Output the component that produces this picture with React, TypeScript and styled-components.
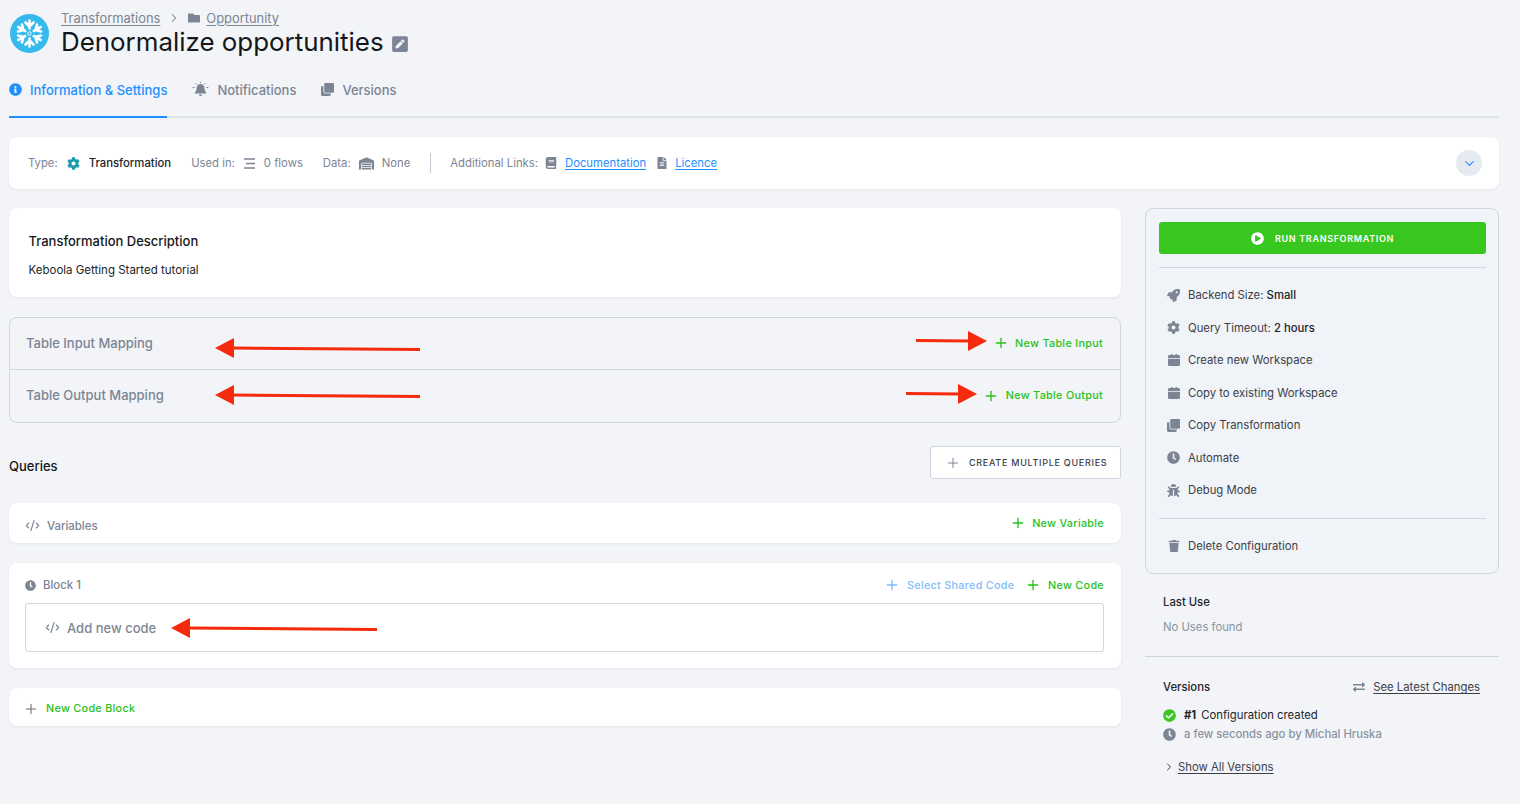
import React, { ReactNode } from "react";
import styled, { createGlobalStyle } from "styled-components";
import { Plus, ChevronRight, ChevronDown, CodeXml } from "lucide-react";
import {
  FaFolder,
  FaPenSquare,
  FaInfoCircle,
  FaClone,
  FaCog,
  FaWarehouse,
  FaBook,
  FaFileAlt,
  FaRocket,
  FaClock,
  FaBug,
  FaTrash,
  FaCheckCircle,
  FaPlayCircle,
  FaExchangeAlt,
} from "react-icons/fa";

const GlobalStyle = createGlobalStyle`
  html, body {
    margin: 0;
    background: #f2f4f8;
    font-family: Inter, "Liberation Sans", sans-serif;
    color: #222529;
  }
  * { box-sizing: border-box; }
`;

const Page = styled.div`
  width: 1520px;
  height: 804px;
  overflow: hidden;
  padding: 8px 21px 0 9px;
`;

const Header = styled.header`
  display: flex;
  gap: 12px;
  height: 52px;
`;

const LogoWrap = styled.div`
  padding: 6px 0 0 1px;
  line-height: 0;
`;

const HeaderText = styled.div`
  display: flex;
  flex-direction: column;
`;

const Crumbs = styled.div`
  display: flex;
  align-items: center;
  height: 18px;
  padding-top: 2px;
  font-size: 12.9px;
  color: #7c8594;
  svg { flex: none; }
`;

const CrumbLink = styled.span`
  text-decoration: underline;
  text-underline-offset: 2px;
  text-decoration-thickness: 1px;
`;

const Title = styled.h1`
  display: flex;
  align-items: center;
  gap: 7px;
  margin: 0;
  font-size: 25.9px;
  line-height: 32px;
  font-weight: 400;
  color: #14171a;
  svg { color: #7c8594; margin-top: 3px; }
`;

const Tabs = styled.nav`
  display: flex;
  gap: 25px;
  margin-top: 13px;
  height: 45px;
  border-bottom: 2px solid #dfe3ea;
`;

const Tab = styled.div<{ $active?: boolean }>`
  display: flex;
  align-items: center;
  gap: 8px;
  height: 45px;
  padding-bottom: 10px;
  font-size: 13px;
  font-weight: 500;
  color: ${({ $active }) => ($active ? "#1f8fff" : "#7c8594")};
  border-bottom: 2px solid ${({ $active }) => ($active ? "#1f8fff" : "transparent")};
`;

const Card = styled.section`
  background: #fff;
  border-radius: 8px;
  box-shadow: 0 1px 3px rgba(34, 37, 41, 0.07);
`;

const MetaBar = styled(Card)`
  display: flex;
  align-items: center;
  height: 52px;
  margin-top: 19px;
  padding: 0 17px 0 19px;
  font-size: 11.3px;
  color: #7c8594;
`;

const MetaGroup = styled.div<{ $gap: number }>`
  display: flex;
  align-items: center;
  gap: ${({ $gap }) => $gap}px;
  margin-right: 20px;
`;

const MetaDivider = styled.div`
  width: 1px;
  height: 20px;
  background: #c5cbd6;
  margin-right: 19px;
`;

const Strong = styled.span`
  color: #222529;
`;

const MediumStrong = styled(Strong)`
  font-weight: 500;
`;

const DocLink = styled.a`
  color: #1f8fff;
  text-decoration: underline;
  text-underline-offset: 2px;
  margin-right: 2px;
`;

const RoundButton = styled.div`
  display: flex;
  align-items: center;
  justify-content: center;
  width: 26px;
  height: 26px;
  margin-left: auto;
  border-radius: 50%;
  background: #e6ebf2;
  color: #1f8fff;
`;

const Columns = styled.div`
  display: grid;
  grid-template-columns: 1112px 354px;
  gap: 24px;
  margin-top: 19px;
`;

const MainColumn = styled.main`
  display: flex;
  flex-direction: column;
`;

const Description = styled(Card)`
  height: 89px;
  padding: 24px 20px 24px 19.5px;
`;

const DescriptionTitle = styled.div`
  font-size: 13px;
  line-height: 18px;
  font-weight: 500;
  color: #14171a;
`;

const DescriptionBody = styled.div`
  font-size: 11.5px;
  line-height: 16px;
  margin-top: 12px;
  color: #222529;
`;

const Mapping = styled.section`
  position: relative;
  margin-top: 20px;
  border: 1px solid #d0d5e0;
  border-radius: 8px;
`;

const MappingRow = styled.div`
  display: flex;
  align-items: center;
  justify-content: space-between;
  height: 51px;
  padding: 0 17px 1px 16px;
  & + & { border-top: 1px solid #d0d5e0; height: 53px; }
`;

const MappingTitle = styled.span`
  padding-bottom: 1px;
  font-size: 13px;
  font-weight: 500;
  color: #7c8594;
`;

const GreenAction = styled.span<{ $muted?: boolean }>`
  display: inline-flex;
  align-items: center;
  gap: 6.5px;
  font-size: 10.8px;
  font-weight: 500;
  letter-spacing: 0.3px;
  color: ${({ $muted }) => ($muted ? "#7fbdfb" : "#28c21a")};
`;

const QueriesHeader = styled.div`
  display: flex;
  align-items: center;
  justify-content: space-between;
  margin-top: 23px;
  height: 33px;
`;

const QueriesTitle = styled.span`
  padding-top: 7px;
  font-size: 13px;
  font-weight: 500;
  color: #14171a;
`;

const OutlineButton = styled.button`
  display: flex;
  align-items: center;
  gap: 8px;
  width: 191px;
  height: 33px;
  padding: 0 0 0 14px;
  background: #fff;
  border: 1px solid #d0d5e0;
  border-radius: 3px;
  font: 500 9px Inter, "Liberation Sans", sans-serif;
  letter-spacing: 0.72px;
  color: #3b4048;
  svg { color: #7c8594; }
`;

const VariablesBar = styled(Card)`
  display: flex;
  align-items: center;
  justify-content: space-between;
  height: 40px;
  margin-top: 24px;
  padding: 0 17px 0 16px;
`;

const CodeLabel = styled.span<{ $drop?: number }>`
  display: flex;
  align-items: center;
  gap: 7px;
  padding-top: ${({ $drop }) => $drop ?? 0}px;
  font-size: 11.4px;
  font-weight: 500;
  color: #7c8594;
`;

const BlockCard = styled(Card)`
  height: 105px;
  margin-top: 20px;
  padding: 12px 17px 16px 16px;
`;

const BlockHeader = styled.div`
  display: flex;
  align-items: center;
  justify-content: space-between;
  height: 20px;
`;

const BlockActions = styled.div`
  display: flex;
  gap: 11px;
`;

const CodeBox = styled.div`
  position: relative;
  display: flex;
  align-items: center;
  gap: 7px;
  height: 49px;
  margin-top: 8px;
  padding-left: 19px;
  border: 1px solid #d0d5e0;
  border-radius: 3px;
  font-size: 13px;
  font-weight: 500;
  color: #7c8594;
`;

const NewBlockBar = styled(Card)`
  display: flex;
  align-items: center;
  gap: 7px;
  height: 38px;
  margin-top: 20px;
  padding: 3px 0 0 14px;
  svg { color: #5f6875; }
`;

const NewBlockLabel = styled.span`
  font-size: 10.8px;
  font-weight: 500;
  letter-spacing: 0.3px;
  color: #28c21a;
`;

const Sidebar = styled.aside`
  display: flex;
  flex-direction: column;
`;

const ActionPanel = styled.section`
  height: 366px;
  padding: 13px 12px 0 13px;
  background: #f0f3f8;
  border: 1px solid #d0d5e0;
  border-radius: 8px;
`;

const RunButton = styled.button`
  display: flex;
  align-items: center;
  justify-content: center;
  gap: 11px;
  width: 100%;
  height: 32px;
  border: 0;
  border-radius: 3px;
  background: #38c71f;
  color: #fff;
  font: 600 9px Inter, "Liberation Sans", sans-serif;
  letter-spacing: 0.67px;
`;

const Rule = styled.hr<{ $top: number; $bottom: number }>`
  margin: ${({ $top, $bottom }) => `${$top}px 0 ${$bottom}px`};
  border: 0;
  border-top: 1px solid #d0d5e0;
`;

const ActionRow = styled.div`
  display: flex;
  align-items: center;
  height: 32.5px;
  padding-left: 8px;
  gap: 8px;
  font-size: 11.3px;
  color: #3b4048;
`;

const ActionIcon = styled.span`
  display: flex;
  align-items: center;
  justify-content: center;
  width: 13px;
  color: #7c8594;
`;

const SideSection = styled.section<{ $top: number }>`
  margin-top: ${({ $top }) => $top}px;
  padding: 0 18px;
  font-size: 11.3px;
`;

const SideTitle = styled.div`
  font-weight: 500;
  line-height: 16px;
  color: #222529;
`;

const MutedText = styled.div`
  margin-top: 9px;
  line-height: 16px;
  color: #8a93a1;
`;

const FullRule = styled.hr`
  margin: 21px 0 0;
  border: 0;
  border-top: 1px solid #d0d5e0;
`;

const VersionsHead = styled.div`
  display: flex;
  align-items: center;
  justify-content: space-between;
  padding-right: 1px;
  svg { color: #7c8594; }
`;

const ChangesLink = styled.span`
  display: flex;
  align-items: center;
  gap: 8px;
  color: #3b4048;
  span {
    text-decoration: underline;
    text-underline-offset: 2px;
  }
`;

const VersionLine = styled.div<{ $muted?: boolean; $top: number }>`
  display: flex;
  align-items: center;
  gap: 8px;
  height: 16px;
  margin-top: ${({ $top }) => $top}px;
  font-weight: ${({ $muted }) => ($muted ? 500 : 400)};
  color: ${({ $muted }) => ($muted ? "#8a93a1" : "#222529")};
  b { font-weight: 700; margin-right: -3px; }
`;

const ShowAll = styled.div`
  display: flex;
  align-items: center;
  gap: 3px;
  height: 16px;
  margin-top: 17px;
  color: #3b4048;
  span {
    text-decoration: underline;
    text-underline-offset: 2px;
  }
`;

const ArrowSvg = styled.svg<{ $left: number; $top: number }>`
  position: absolute;
  left: ${({ $left }) => $left}px;
  top: ${({ $top }) => $top}px;
`;

const Snowflake = () => (
  <svg width="39" height="39" viewBox="0 0 39 39">
    <circle cx="19.5" cy="19.5" r="19.5" fill="#36b9ec" />
    <g stroke="#fff" strokeWidth="2.6" strokeLinecap="round" strokeLinejoin="round" fill="none">
      {[0, 60, 120, 180, 240, 300].map((deg) => (
        <g key={deg} transform={`rotate(${deg} 19.5 19.5)`}>
          <path d="M19.5 14.500V6.500M15.500 8.500l4 4 4-4" />
        </g>
      ))}
    </g>
    <circle cx="19.5" cy="19.5" r="1.7" fill="none" stroke="#fff" strokeWidth="1" />
  </svg>
);

const RingingBell = () => (
  <svg width="17" height="15" viewBox="0 0 17 15" fill="#7c8594">
    <path d="M8.5 2C6.2 2 4.6 3.8 4.6 6c0 2.700-1 3.900-1.800 4.700-.3.400-.1.800.4.800h10.600c.5 0 .7-.4.400-.8C13.900 9.900 12.400 8.700 12.400 6c0-2.200-1.600-4-3.900-4zM6.900 12.500a1.600 1.600 0 0 0 3.200 0z" />
    <path d="M3.600 1.200l1.300 1.300M13.400 1.200l-1.300 1.300M.6 5.600h2M14.400 5.600h2M8.500 0v1" stroke="#7c8594" strokeWidth="1" />
  </svg>
);

const UsedInIcon = () => (
  <svg width="13" height="11" viewBox="0 0 13 11" stroke="#7c8594" strokeWidth="1.500">
    <path d="M1 1h11M3 5.500h9M1 10h11" />
  </svg>
);

const WorkspaceIcon = () => (
  <svg width="12" height="12" viewBox="0 0 12 12" fill="#7c8594">
    <path d="M0 4.800h12v5.700c0 .8-.6 1.500-1.400 1.500H1.400C.6 12 0 11.300 0 10.500z" />
    <path d="M1.400 1H3V0h1.500v1h3V0H9v1h1.600C11.400 1 12 1.700 12 2.500V4H0V2.500C0 1.700.6 1 1.400 1z" />
  </svg>
);

const RedArrow = ({
  left,
  top,
  width,
  dir,
}: {
  left: number;
  top: number;
  width: number;
  dir: "left" | "right";
}) => {
  const flip = dir === "right" ? `translate(${width} 0) scale(-1 1)` : undefined;
  // the long hand-drawn arrows sag a little towards the tail
  const sag = width > 100 ? 1.5 : -0.5;
  return (
    <ArrowSvg $left={left} $top={top} width={width} height={24} viewBox={`0 0 ${width} 24`}>
      <g transform={flip} fill="#f62b0e">
        <path d="M0 12 L19 2 V22 Z" />
        <path d={`M18 10.500 L${width} ${10.5 + sag} V${13.5 + sag} L18 13.500 Z`} />
      </g>
    </ArrowSvg>
  );
};

const Action = ({ icon, children }: { icon: ReactNode; children: ReactNode }) => (
  <ActionRow>
    <ActionIcon>{icon}</ActionIcon>
    <span>{children}</span>
  </ActionRow>
);

const NewAction = ({ label, muted }: { label: string; muted?: boolean }) => (
  <GreenAction $muted={muted}>
    <Plus size={16} strokeWidth={2} />
    {label}
  </GreenAction>
);

const App = () => {
  return (
    <Page>
      <GlobalStyle />
      <Header>
        <LogoWrap>
          <Snowflake />
        </LogoWrap>
        <HeaderText>
          <Crumbs>
            <CrumbLink>Transformations</CrumbLink>
            <ChevronRight size={14} strokeWidth={1.800} style={{ margin: "0 7px" }} />
            <FaFolder size={12} style={{ marginRight: 6 }} />
            <CrumbLink>Opportunity</CrumbLink>
          </Crumbs>
          <Title>
            Denormalize opportunities
            <FaPenSquare size={18} />
          </Title>
        </HeaderText>
      </Header>

      <Tabs>
        <Tab $active>
          <FaInfoCircle size={13} />
          Information &amp; Settings
        </Tab>
        <Tab>
          <RingingBell />
          Notifications
        </Tab>
        <Tab>
          <FaClone size={13} />
          Versions
        </Tab>
      </Tabs>

      <MetaBar>
        <MetaGroup $gap={9}>
          Type:
          <FaCog size={13} color="#1d9ab0" />
          <MediumStrong>Transformation</MediumStrong>
        </MetaGroup>
        <MetaGroup $gap={8}>
          Used in:
          <UsedInIcon />
          0 flows
        </MetaGroup>
        <MetaGroup $gap={8}>
          Data:
          <FaWarehouse size={15} />
          None
        </MetaGroup>
        <MetaDivider />
        <MetaGroup $gap={7.5}>
          Additional Links:
          <FaBook size={12} />
          <DocLink>Documentation</DocLink>
          <FaFileAlt size={12} />
          <DocLink>Licence</DocLink>
        </MetaGroup>
        <RoundButton>
          <ChevronDown size={15} strokeWidth={1.800} />
        </RoundButton>
      </MetaBar>

      <Columns>
        <MainColumn>
          <Description>
            <DescriptionTitle>Transformation Description</DescriptionTitle>
            <DescriptionBody>Keboola Getting Started tutorial</DescriptionBody>
          </Description>

          <Mapping>
            <MappingRow>
              <MappingTitle>Table Input Mapping</MappingTitle>
              <NewAction label="New Table Input" />
            </MappingRow>
            <MappingRow>
              <MappingTitle>Table Output Mapping</MappingTitle>
              <NewAction label="New Table Output" />
            </MappingRow>
            <RedArrow left={205} top={18} width={205} dir="left" />
            <RedArrow left={906} top={11} width={71} dir="right" />
            <RedArrow left={205} top={65} width={205} dir="left" />
            <RedArrow left={896} top={64} width={71} dir="right" />
          </Mapping>

          <QueriesHeader>
            <QueriesTitle>Queries</QueriesTitle>
            <OutlineButton>
              <Plus size={16} strokeWidth={1.500} />
              CREATE MULTIPLE QUERIES
            </OutlineButton>
          </QueriesHeader>

          <VariablesBar>
            <CodeLabel $drop={5}>
              <CodeXml size={15} strokeWidth={1.800} />
              Variables
            </CodeLabel>
            <NewAction label="New Variable" />
          </VariablesBar>

          <BlockCard>
            <BlockHeader>
              <CodeLabel>
                <FaClock size={11} />
                Block 1
              </CodeLabel>
              <BlockActions>
                <NewAction muted label="Select Shared Code" />
                <NewAction label="New Code" />
              </BlockActions>
            </BlockHeader>
            <CodeBox>
              <CodeXml size={15} strokeWidth={1.800} />
              Add new code
              <RedArrow left={145} top={12} width={206} dir="left" />
            </CodeBox>
          </BlockCard>

          <NewBlockBar>
            <Plus size={16} strokeWidth={1.500} />
            <NewBlockLabel>New Code Block</NewBlockLabel>
          </NewBlockBar>
        </MainColumn>

        <Sidebar>
          <ActionPanel>
            <RunButton>
              <FaPlayCircle size={13} />
              RUN TRANSFORMATION
            </RunButton>
            <Rule $top={13} $bottom={11} />
            <Action icon={<FaRocket size={13} />}>
              Backend Size: <MediumStrong>Small</MediumStrong>
            </Action>
            <Action icon={<FaCog size={13} />}>
              Query Timeout: <MediumStrong>2 hours</MediumStrong>
            </Action>
            <Action icon={<WorkspaceIcon />}>Create new Workspace</Action>
            <Action icon={<WorkspaceIcon />}>Copy to existing Workspace</Action>
            <Action icon={<FaClone size={13} />}>Copy Transformation</Action>
            <Action icon={<FaClock size={15} />}>Automate</Action>
            <Action icon={<FaBug size={13} />}>Debug Mode</Action>
            <Rule $top={11} $bottom={11} />
            <Action icon={<FaTrash size={12} />}>Delete Configuration</Action>
          </ActionPanel>

          <SideSection $top={20}>
            <SideTitle>Last Use</SideTitle>
            <MutedText>No Uses found</MutedText>
          </SideSection>
          <FullRule />

          <SideSection $top={22}>
            <VersionsHead>
              <SideTitle>Versions</SideTitle>
              <ChangesLink>
                <FaExchangeAlt size={12} />
                <span>See Latest Changes</span>
              </ChangesLink>
            </VersionsHead>
            <VersionLine $top={12}>
              <FaCheckCircle size={13} color="#38c71f" />
              <b>#1</b> Configuration created
            </VersionLine>
            <VersionLine $muted $top={3}>
              <FaClock size={13} color="#7c8594" />
              a few seconds ago by Michal Hruska
            </VersionLine>
            <ShowAll>
              <ChevronRight size={12} strokeWidth={2} />
              <span>Show All Versions</span>
            </ShowAll>
          </SideSection>
        </Sidebar>
      </Columns>
    </Page>
  );
};

export default App;
